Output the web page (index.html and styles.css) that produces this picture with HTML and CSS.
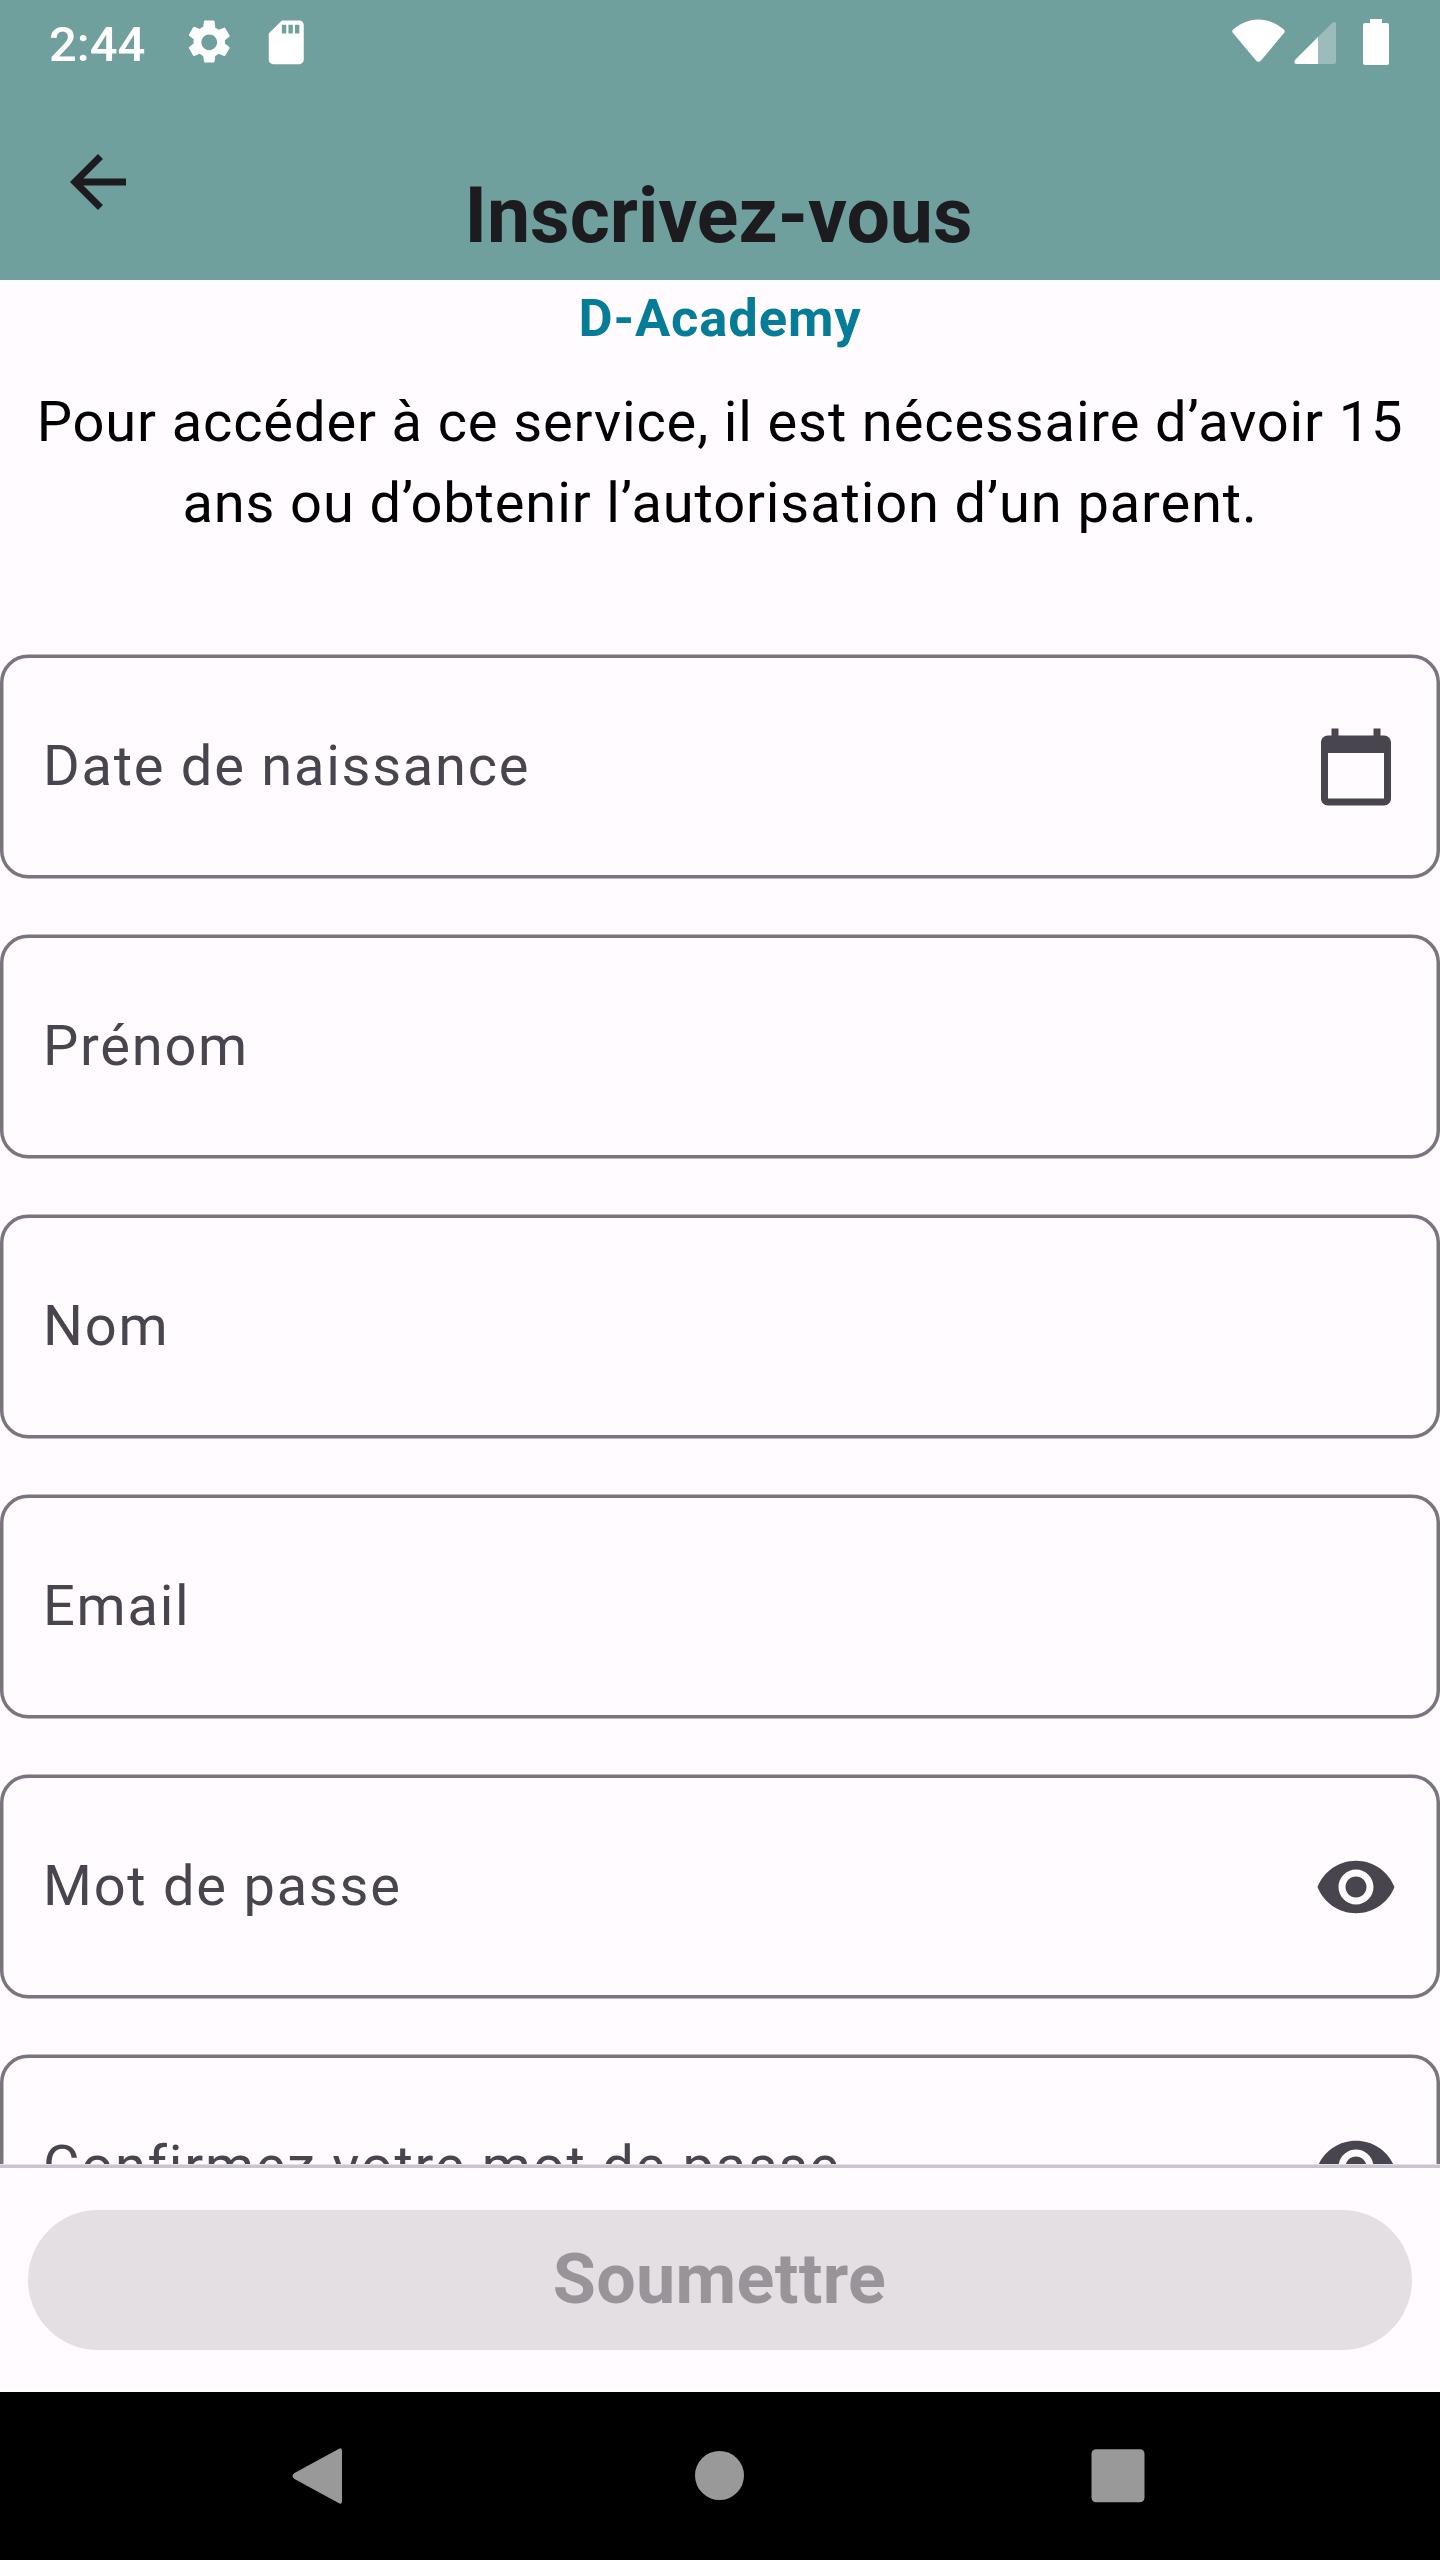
FILE: index.html
```html
<!DOCTYPE html>
<html lang="fr">
<head>
<meta charset="utf-8">
<title>Inscrivez-vous</title>
<link rel="stylesheet" href="styles.css">
</head>
<body>
<svg class="defs" width="0" height="0" aria-hidden="true">
  <symbol id="eye" viewBox="0 0 24 24"><path d="M12 4.5C7 4.5 2.73 7.61 1 12c1.73 4.39 6 7.5 11 7.5s9.27-3.11 11-7.5c-1.73-4.39-6-7.5-11-7.5zM12 17c-2.76 0-5-2.24-5-5s2.24-5 5-5 5 2.24 5 5-2.24 5-5 5zm0-8c-1.66 0-3 1.34-3 3s1.34 3 3 3 3-1.34 3-3-1.34-3-3-3z"/></symbol>
  <symbol id="outline" viewBox="0 0 1440 225"><rect x="1.75" y="2.25" width="1436.5" height="220.5" rx="26.25" fill="none" stroke="#79747e" stroke-width="3.5"/></symbol>
</svg>
<div class="screen">
  <header class="header">
    <div class="status">
      <span class="clock">2:44</span>
      <svg class="gear" viewBox="0 0 24 24"><path d="M19.14 12.94c.04-.3.06-.61.06-.94 0-.32-.02-.64-.07-.94l2.03-1.58c.18-.14.23-.41.12-.61l-1.92-3.32c-.12-.22-.37-.29-.59-.22l-2.39.96c-.5-.38-1.03-.7-1.62-.94L14.4 2.41c-.04-.24-.24-.41-.48-.41h-3.84c-.24 0-.43.17-.47.41l-.36 2.54c-.59.24-1.13.57-1.62.94l-2.39-.96c-.22-.08-.47 0-.59.22L2.74 8.47c-.12.21-.08.47.12.61l2.03 1.58c-.05.3-.09.63-.09.94s.02.64.07.94l-2.03 1.58c-.18.14-.23.41-.12.61l1.92 3.32c.12.22.37.29.59.22l2.39-.96c.5.38 1.03.7 1.62.94l.36 2.54c.05.24.24.41.48.41h3.84c.24 0 .44-.17.47-.41l.36-2.54c.59-.24 1.13-.56 1.62-.94l2.39.96c.22.08.47 0 .59-.22l1.92-3.32c.12-.22.07-.47-.12-.61l-2.01-1.58zM12 15.6c-1.98 0-3.6-1.62-3.6-3.6s1.62-3.6 3.6-3.6 3.6 1.62 3.6 3.6-1.62 3.6-3.6 3.6z"/></svg>
      <svg class="sdcard" viewBox="0 0 24 24"><path d="M18 2h-8L4 8v12c0 1.1.9 2 2 2h12c1.1 0 2-.9 2-2V4c0-1.1-.9-2-2-2zm-6 6h-2V4h2v4zm3 0h-2V4h2v4zm3 0h-2V4h2v4z"/></svg>
      <svg class="signals" viewBox="0 0 160 48">
        <path d="M2.7 10.2C10 4.400 18.300 1.500 26.500 1.500S43 4.400 50.300 10.200Q54 12.400 52.200 14.800L29 42.600Q26.500 45 24 42.600L.8 14.800Q-1 12.400 2.700 10.200Z"/>
        <path d="M86 19L63 42Q61 46 65 46H86Z"/>
        <path opacity=".3" d="M86 19L100.500 4.800Q104 2.500 104 6V44Q104 46 102 46H86Z"/>
        <path d="M138 1H150V5H155Q157 5 157 7V45Q157 47 155 47H133Q131 47 131 45V7Q131 5 133 5H138Z"/>
      </svg>
    </div>
    <div class="toolbar">
      <svg class="back" viewBox="0 0 24 24"><path d="M20 11H7.83l5.59-5.59L12 4l-8 8 8 8 1.410-1.410L7.830 13H20v-2z"/></svg>
      <h1 class="title">Inscrivez-vous</h1>
    </div>
  </header>
  <main class="content">
    <h2 class="brand">D-Academy</h2>
    <p class="notice">Pour accéder à ce service, il est nécessaire d’avoir 15<br>ans ou d’obtenir l’autorisation d’un parent.</p>
    <div class="fields">
      <div class="field"><svg class="outline"><use href="#outline"/></svg><span class="label">Date de naissance</span>
        <svg class="icon" viewBox="0 0 24 24"><path d="M20 3h-1V1h-2v2H7V1H5v2H4c-1.100 0-2 .9-2 2v16c0 1.100.9 2 2 2h16c1.100 0 2-.9 2-2V5c0-1.100-.9-2-2-2zm0 18H4V8h16v13z"/></svg></div>
      <div class="field"><svg class="outline"><use href="#outline"/></svg><span class="label">Prénom</span></div>
      <div class="field"><svg class="outline"><use href="#outline"/></svg><span class="label">Nom</span></div>
      <div class="field"><svg class="outline"><use href="#outline"/></svg><span class="label">Email</span></div>
      <div class="field"><svg class="outline"><use href="#outline"/></svg><span class="label">Mot de passe</span><svg class="icon"><use href="#eye"/></svg></div>
      <div class="field"><svg class="outline"><use href="#outline"/></svg><span class="label">Confirmez votre mot de passe</span><svg class="icon"><use href="#eye"/></svg></div>
    </div>
  </main>
  <footer class="footer"><button class="submit" disabled>Soumettre</button></footer>
  <nav class="nav">
    <svg viewBox="0 0 56 56"><path d="M49 .8Q52 -1 52 3V53Q52 57 49 55.200L4.500 31Q.5 28 4.500 25Z"/></svg>
    <svg viewBox="0 0 56 56"><circle cx="29.500" cy="27.500" r="24.500"/></svg>
    <svg viewBox="0 0 56 56"><rect x="1.500" y="1.200" width="53" height="53" rx="4.500"/></svg>
  </nav>
</div>
</body>
</html>
```
FILE: styles.css
```css
* { box-sizing: border-box; }
body { margin: 0; background: #fffbff; font-family: Roboto, sans-serif; }
svg { display: block; flex: none; }
h1, h2, p { margin: 0; }
.defs { position: absolute; }
.screen { width: 1440px; height: 2560px; display: flex; flex-direction: column; overflow: hidden; }

.header { height: 280px; flex: none; background: #70a09d; }
.status { height: 84px; display: flex; align-items: flex-start; padding: 16px 46px 0 49px; fill: #fff; color: #fff; }
.clock { width: 134px; font-size: 49px; font-weight: 500; line-height: 57px; }
.gear { width: 52.5px; height: 52.5px; }
.sdcard { width: 52.5px; height: 52.5px; margin-left: 24.5px; }
.signals { width: 160px; height: 48px; margin: 2px 2px 0 auto; }
.toolbar { height: 196px; display: grid; grid-template-columns: 84px 1fr 84px; padding: 56px 56px 0; }
.back { width: 84px; height: 84px; fill: #1c1b1f; }
.title { font-size: 77px; font-weight: 700; line-height: 90px; padding: 31px 3px 0 0; text-align: center; color: #1c1b1f; white-space: nowrap; }

.content { height: 1884px; flex: none; overflow: hidden; text-align: center; }
.brand { font-size: 52.5px; font-weight: 700; line-height: 62px; letter-spacing: .875px; padding-top: 7px; color: #057d98; }
.notice { font-size: 56px; line-height: 81px; letter-spacing: .875px; padding-top: 33px; color: #000; white-space: nowrap; }
.fields { display: flex; flex-direction: column; gap: 55px; padding-top: 110px; }
.field { position: relative; height: 225px; flex: none; display: flex; align-items: center; justify-content: space-between; padding: 0 42px 0 43px; }
.outline { position: absolute; inset: 0; width: 100%; height: 100%; }
.label { font-size: 56px; line-height: 84px; letter-spacing: 1.75px; padding-bottom: 2px; color: #49454f; white-space: nowrap; }
.icon { width: 84px; height: 84px; fill: #49454f; }

.footer { height: 228px; flex: none; border-top: 1px solid #e4dfe7; box-shadow: inset 0 3px #cac4d0; padding: 45px 28px 0; }
.submit { display: block; width: 100%; height: 140px; border: 0; padding: 0 1px 2px 0; border-radius: 70px; background: #e4dfe3; color: #99949a; font: 700 70px/138px Roboto, sans-serif; letter-spacing: .35px; }
.nav { height: 168px; flex: none; background: #000; fill: #999; display: flex; align-items: center; justify-content: space-between; padding: 0 294px 0 290px; }
.nav svg { width: 56px; height: 56px; }
```
